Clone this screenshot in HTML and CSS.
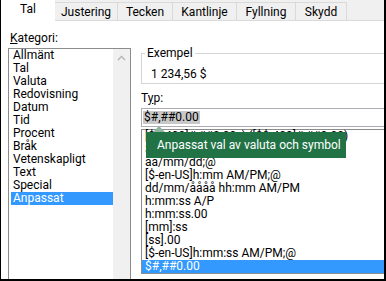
FILE: index.html
```html
<!DOCTYPE html>
<html lang="sv">
<head>
<meta charset="utf-8">
<link rel="stylesheet" href="styles.css">
</head>
<body>
<div class="frame">
  <div class="tabs">
    <div class="tab active">Tal</div>
    <div class="tab t2">Justering</div>
    <div class="tab t3">Tecken</div>
    <div class="tab t4">Kantlinje</div>
    <div class="tab t5">Fyllning</div>
    <div class="tab t6">Skydd</div>
  </div>
  <div class="content">
    <div class="left">
      <div class="label cat-label"><u>K</u>ategori:</div>
      <div class="catlist">
        <ul class="items">
          <li>Allmänt</li>
          <li>Tal</li>
          <li>Valuta</li>
          <li>Redovisning</li>
          <li>Datum</li>
          <li>Tid</li>
          <li>Procent</li>
          <li>Bråk</li>
          <li>Vetenskapligt</li>
          <li>Text</li>
          <li>Special</li>
          <li class="sel">Anpassat</li>
        </ul>
        <div class="scroll">
          <svg class="chev" width="9" height="6" viewBox="0 0 9 6"><path d="M1 5 L4.5 1.5 L8 5" fill="none" stroke="#b4b4b4" stroke-width="1.4"/></svg>
        </div>
      </div>
    </div>
    <div class="right">
      <div class="group">
        <div class="legend">Exempel</div>
        <div class="sample">1 234,56 $</div>
      </div>
      <div class="label typ-label">T<u>y</u>p:</div>
      <div class="input"><span class="hl">$#,##0.00</span></div>
      <div class="fmtwrap">
        <ul class="fmtlist">
          <li>[$$-409]#,##0.00_);([$$-409]#,##0.00)</li>
          <li>$#,##0.00_);($#,##0.00)</li>
          <li>aa/mm/dd;@</li>
          <li>[$-en-US]h:mm AM/PM;@</li>
          <li>dd/mm/åååå hh:mm AM/PM</li>
          <li>h:mm:ss A/P</li>
          <li>h:mm:ss.00</li>
          <li>[mm]:ss</li>
          <li>[ss].00</li>
          <li>[$-en-US]h:mm:ss AM/PM;@</li>
          <li class="sel">$#,##0.00</li>
        </ul>
        <div class="tooltip">Anpassat val av valuta och symbol</div>
      </div>
    </div>
  </div>
</div>
</body>
</html>
```
FILE: styles.css
```css
* { box-sizing: border-box; }
html, body { margin: 0; padding: 0; background: #fff; }
body {
  font-family: Roboto, "Liberation Sans", sans-serif;
  font-size: 12px;
  color: #000;
}
.frame {
  width: 386px;
  height: 281px;
  border-left: 1px solid #000;
  border-right: 2px solid #000;
  border-bottom: 2px solid #000;
  overflow: hidden;
  background: #fff;
}
.tabs {
  display: flex;
  height: 21px;
  background: #f0f0f0;
  border-bottom: 1px solid #dadada;
}
.tab {
  margin-top: 2px;
  height: 18px;
  border-top: 1px solid #dadada;
  border-left: 1px solid #dadada;
  line-height: 17px;
  padding-top: 1px;
  text-align: center;
  background: #f0f0f0;
  white-space: nowrap;
}
.tab.active {
  margin-top: 0;
  height: 21px;
  width: 54px;
  background: #fff;
  border: none;
  padding-top: 1px;
}
.t2 { width: 62px; border-left: none; }
.t3 { width: 55px; }
.t4 { width: 64px; }
.t5 { width: 59px; }
.t6 { width: 52px; border-right: 1px solid #dadada; }

.content {
  display: flex;
}
.left {
  margin-left: 7px;
  width: 123px;
}
.label { line-height: 16px; }
.cat-label {
  margin-top: 9px;
  padding-left: 2px;
}
.catlist {
  margin-top: 2px;
  height: 240px;
  border: 1px solid #8c8c8c;
  display: flex;
}
.items {
  list-style: none;
  margin: 0 0 0 2px;
  padding: 0;
  width: 102px;
}
.items li {
  height: 13px;
  line-height: 13px;
  padding-left: 2px;
  white-space: nowrap;
}
.sel { background: #3399ff; color: #fff; }
.scroll {
  width: 17px;
  background: #f0f0f0;
  display: flex;
  justify-content: center;
  align-items: flex-start;
  padding-top: 6px;
}
.right {
  margin-left: 10px;
  flex: 1;
  min-width: 0;
}
.group {
  margin-top: 32px;
  border: 1px solid #d5d5d5;
  border-right: none;
  padding-bottom: 1px;
  display: flex;
  flex-direction: column;
  align-items: flex-start;
}
.legend {
  margin-top: -9px;
  margin-left: 3px;
  padding: 0 2px;
  line-height: 16px;
  background: #fff;
}
.sample {
  margin-top: 5px;
  padding-left: 9px;
  line-height: 16px;
}
.typ-label {
  margin-top: 6px;
}
.input {
  margin-top: 2px;
  height: 19px;
  border: 1px solid #abadb3;
  border-right: none;
  padding: 2px 0 0 1px;
}
.hl {
  display: inline-block;
  background: #c8c8c8;
  line-height: 13px;
  padding: 0 1px;
  vertical-align: top;
}
.fmtwrap {
  position: relative;
  margin-top: 2px;
}
.fmtlist {
  list-style: none;
  margin: 0;
  padding: 0;
  border: 1px solid #8c8c8c;
  border-right: none;
}
.fmtlist li {
  height: 13px;
  line-height: 13px;
  padding-left: 3px;
  white-space: nowrap;
}
.tooltip {
  position: absolute;
  left: 5px;
  top: 3px;
  width: 200px;
  height: 26px;
  background: #217346;
  color: #fff;
  font-size: 12px;
  line-height: 26px;
  padding-left: 11px;
  white-space: nowrap;
}
.tooltip::before {
  content: "";
  position: absolute;
  left: 7px;
  top: -6px;
  border-left: 6px solid transparent;
  border-right: 6px solid transparent;
  border-bottom: 6px solid #8fb39d;
}
```
